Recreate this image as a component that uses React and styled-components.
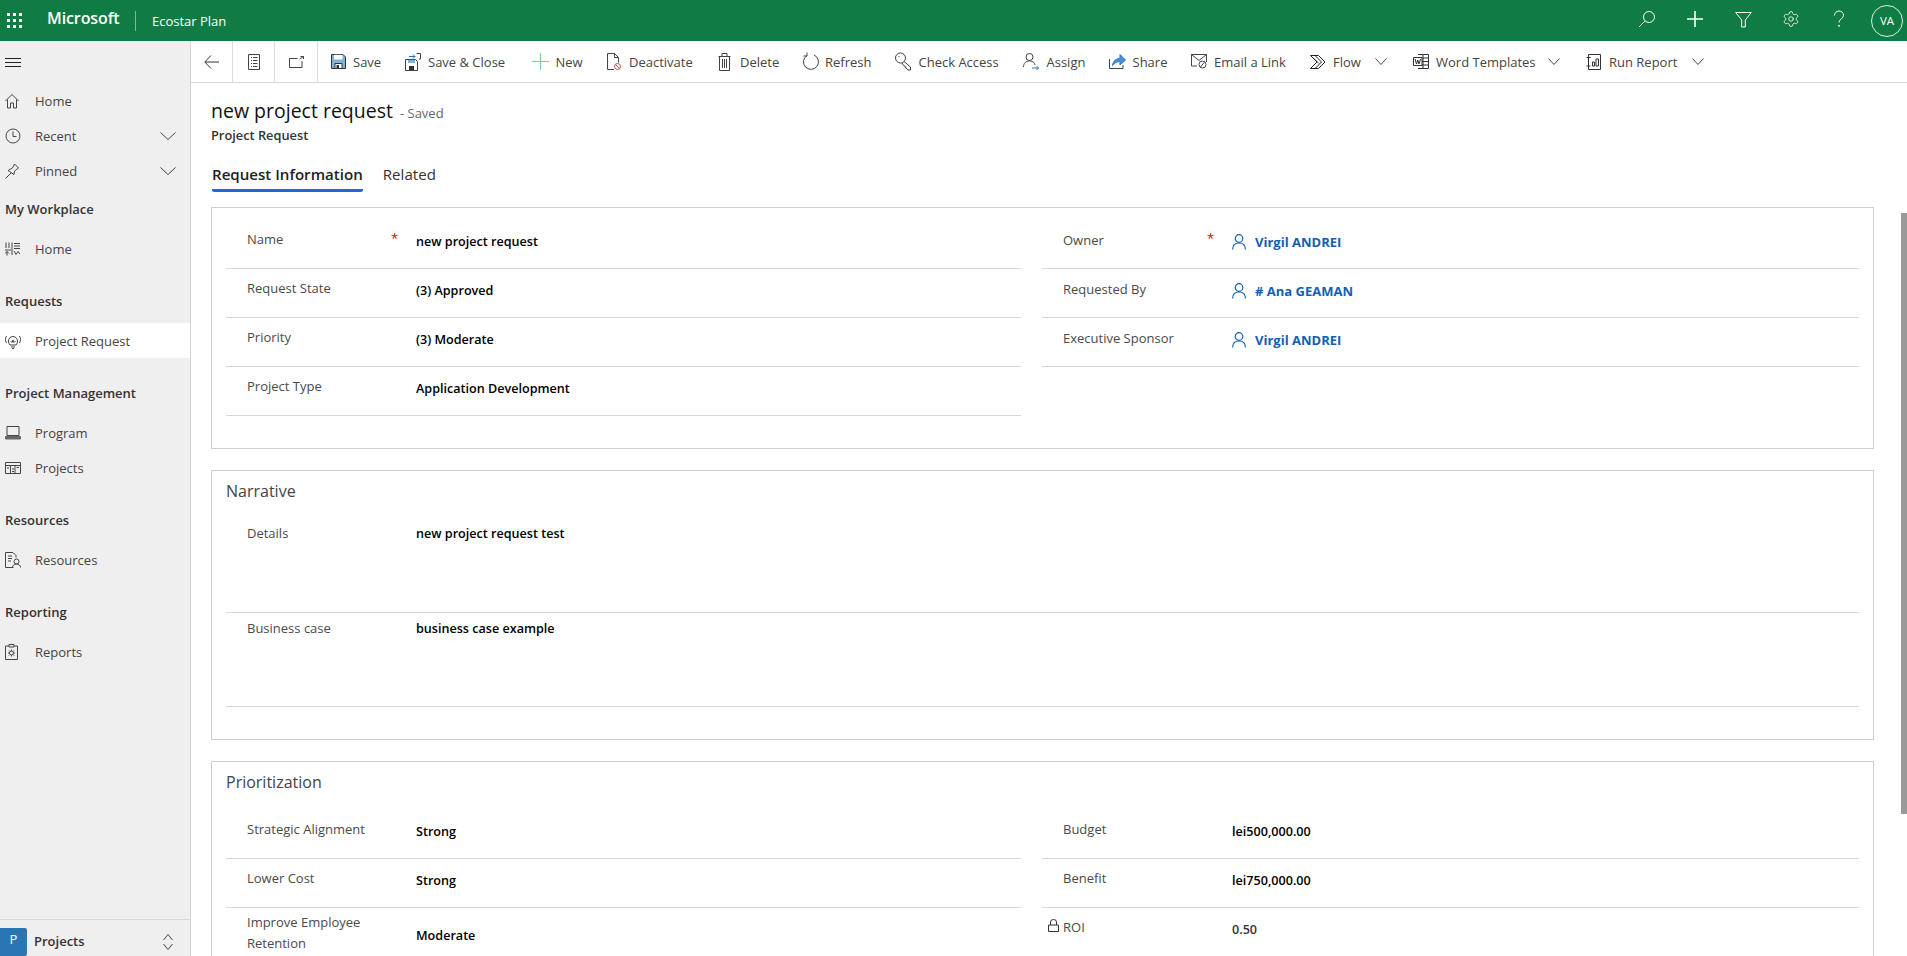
import React from "react";
import styled, { createGlobalStyle } from "styled-components";
import { Settings } from "lucide-react";

const FONT = `"Open Sans", "Noto Sans", "Liberation Sans", sans-serif`;

const Global = createGlobalStyle`
  html, body { margin: 0; padding: 0; height: 100%; overflow: hidden; background: #fff; }
  body { font-family: ${FONT}; color: #333; }
  * { box-sizing: border-box; }
`;

const Page = styled.div`display: flex; flex-direction: column; height: 956px; width: 1907px; overflow: hidden;`;
const Body = styled.div`display: flex; flex: 1; min-height: 0;`;

/* ---------- top bar ---------- */
const TopBar = styled.header`display: flex; align-items: center; height: 41px; flex: none; background: #107c45; color: #fff;`;
const Waffle = styled.div`width: 47px; padding-left: 7px; display: flex; align-items: center;`;
const Brand = styled.span`font-size: 16px; font-weight: 600; letter-spacing: -0.1px; width: 88px; line-height: 41px; padding-bottom: 4px;`;
const BrandRule = styled.span`width: 1px; height: 20px; background: rgba(255,255,255,.45); margin-right: 16px;`;
const AppName = styled.span`font-size: 13px; flex: 1; line-height: 20px;`;
const GlobalActions = styled.div`display: flex; align-items: center; padding-right: 3px;`;
const GlobalAction = styled.div`width: 48px; height: 41px; display: flex; align-items: center; justify-content: center; padding-bottom: 3px;`;
const Avatar = styled.div`width: 32px; height: 32px; border-radius: 50%; border: 1px solid rgba(255,255,255,.85); font-size: 11.5px; display: flex; align-items: center; justify-content: center; margin: 0 1px 0 8px;`;

/* ---------- sidebar ---------- */
const Side = styled.aside`width: 191px; flex: none; background: #efefef; border-right: 1px solid #d4d4d4; display: flex; flex-direction: column;`;
const Burger = styled.div`height: 42px; padding: 1px 0 0 5px; display: flex; align-items: center;`;
const NavList = styled.nav`flex: 1; display: flex; flex-direction: column;`;
const NavHead = styled.div`height: 21px; line-height: 21px; margin: ${p => p.$first ? "11px" : "25px"} 0 11px; padding-left: 5px; font-size: 13px; font-weight: 600; color: #333;`;
const NavItem = styled.div`height: 35px; display: flex; align-items: center; padding-left: 5px; font-size: 13px; color: #444; background: ${p => p.$active ? "#fff" : "transparent"};`;
const NavIcon = styled.span`width: 30px; display: flex; align-items: center; flex: none;`;
const NavText = styled.span`flex: 1;`;
const NavChevron = styled.span`width: 30px; display: flex;`;
const AreaBar = styled.div`height: 37px; flex: none; border-top: 1px solid #d8d8d8; display: flex; align-items: center; padding-top: 7px;`;
const AreaTile = styled.div`width: 27px; height: 28px; background: #2a75b3; color: #fff; font-size: 13px; display: flex; align-items: center; justify-content: center; border-radius: 0 2px 2px 0; padding-bottom: 5px;`;
const AreaName = styled.span`font-size: 13px; font-weight: 600; color: #333; margin-left: 7px; flex: 1; padding-bottom: 2px;`;
const AreaArrows = styled.span`width: 27px; display: flex;`;

/* ---------- main ---------- */
const Main = styled.main`flex: 1; min-width: 0; position: relative; display: flex; flex-direction: column;`;
const Toolbar = styled.div`height: 42px; flex: none; display: flex; align-items: stretch; border-bottom: 1px solid #d8d8d8; font-size: 13px; color: #444;`;
const ToolSquare = styled.div`width: ${p => p.$w}px; display: flex; align-items: center; justify-content: center; border-right: 1px solid #dcdcdc;`;
const ToolLead = styled.div`width: 13px; flex: none;`;
const ToolButton = styled.div`width: ${p => p.$w}px; flex: none; display: flex; align-items: center; white-space: nowrap;`;
const ToolIcon = styled.span`width: ${p => p.$w}px; flex: none; display: flex; align-items: center;`;
const ToolLabel = styled.span`flex: ${p => p.$fill ? 1 : "none"}; line-height: 20px;`;
const ToolChevron = styled.span`width: 38px; flex: none; display: flex;`;

const Scroller = styled.div`flex: 1; overflow: hidden; padding: 0 33px 0 20px;`;
const Head = styled.div`padding-top: 13px; height: 124px;`;
const TitleRow = styled.div`display: flex; align-items: baseline; height: 30px; line-height: 30px;`;
const Title = styled.h1`margin: 0; font-size: 19.5px; font-weight: 500; color: #111; line-height: 30px;`;
const Saved = styled.span`font-size: 13px; color: #666; margin-left: 7px;`;
const Entity = styled.div`font-size: 12.8px; font-weight: 600; color: #333; line-height: 18px; height: 25px;`;
const Tabs = styled.div`display: flex; gap: 20px; margin-top: 9px; padding-left: 1px;`;
const Tab = styled.div`font-size: 15.1px; font-weight: ${p => p.$on ? 600 : 400}; color: ${p => p.$on ? "#222" : "#333"}; line-height: 22px; height: 32px; padding-top: 3px; ${p => p.$on ? "border-bottom: 3px solid #2266e3; border-radius: 0 0 2px 2px;" : ""}`;

const Section = styled.section`border: 1px solid #cfcfcf; padding: 0 14px; margin-bottom: 21px; height: ${p => p.$h}px;`;
const SectionTitle = styled.h2`margin: 0; font-size: 16px; font-weight: 400; color: #444; height: ${p => p.$h}px; line-height: 20px; padding-top: 10px;`;
const Columns = styled.div`display: grid; grid-template-columns: 795px 817px; column-gap: 21px; padding-top: ${p => p.$top || 0}px;`;
const Column = styled.div`display: flex; flex-direction: column;`;
const Row = styled.div`display: grid; grid-template-columns: 21px 146px 23px 1fr; height: ${p => p.$h || 49}px; border-bottom: 1px solid #d8d8d8;`;
const BareRow = styled(Row)`border-bottom: none;`;
const LockSlot = styled.span`padding: ${p => p.$top || 0}px 0 0 6px;`;
const Label = styled.div`font-size: 13px; color: #4a4a4a; line-height: 21px; padding-top: ${p => p.$top ?? 9}px;`;
const Star = styled.span`color: #d00; font-size: 13px; line-height: 16px; padding-top: 10px; margin-left: -2px;`;
const Value = styled.div`font-size: 12.6px; font-weight: 600; color: ${p => p.$plain ? "#333" : "#000"}; line-height: 20px; padding-top: ${p => p.$top ?? 12}px;`;
const LinkValue = styled.div`display: flex; align-items: center; gap: 9px; height: 20px; margin-top: 12px; font-size: 13px; font-weight: 700; color: #1160b7;`;
const Thumb = styled.div`position: absolute; right: 0; top: 172px; width: 6px; height: 601px; background: #999;`;

/* ---------- icons ---------- */
const Svg = ({ w = 16, h = 16, c = "#444", sw = 1, vb, children }) => (
  <svg width={w} height={h} viewBox={vb || `0 0 ${w} ${h}`} fill="none" stroke={c} strokeWidth={sw}>{children}</svg>
);
const Chevron = ({ w = 16, c = "#444" }) => <Svg w={w} h={10} c={c} vb={`0 0 ${w} 10`}><path d={`M.5 1.500 L${w / 2} ${w > 13 ? 8.500 : 7.500} L${w - .5} 1.500`} /></Svg>;

const I = {
  waffle: <svg width="16" height="16" fill="#fff">{[1, 7, 13].flatMap(y => [1, 7, 13].map(x => <rect key={x + "-" + y} x={x - 1} y={y - 1} width="3" height="3" />))}</svg>,
  search: <Svg w={18} h={18} c="#fff"><circle cx="11" cy="7" r="5.500" /><path d="M7 11 L1 17" /></Svg>,
  plus: <Svg w={18} h={18} c="#fff" sw={1.6}><path d="M9 1V17M1 9H17" /></Svg>,
  filter: <Svg w={17} h={17} c="#fff"><path d="M.7 1.500H16.300L10.300 9V16H6.700V9Z" /></Svg>,
  gear: <Settings size={18} strokeWidth={1.1} color="#fff" />,
  help: <Svg w={12} h={18} c="#fff"><path d="M1.500 5.500C1.500 3 3.500 1 6 1s4.500 1.800 4.500 4.300c0 3.500-4.500 3.800-4.500 7.200" /><circle cx="6" cy="15.800" r=".6" /></Svg>,
  burger: <Svg w={16} h={10}><path stroke="#222" d="M0 .5H16M0 4.500H16M0 8.500H16" /></Svg>,
  home: <Svg w={14} h={16}><path d="M.5 8L7 1.500 13.500 8M2.500 6.500V15H5.500V10H8.500V15H11.500V6.500" /></Svg>,
  clock: <Svg w={16} h={16}><circle cx="8" cy="8" r="7" /><path d="M8 3.500V8.500H11.500" /></Svg>,
  pin: <Svg w={16} h={16}><path d="M.5 15.500L6 10M3 7.500L9 11.500 9.500 8 13.500 5 9.500 1 7.500 5 3 7.500Z" /></Svg>,
  grid: <Svg w={16} h={14}><path d="M1 .5V6M4 .5V6M7 .5V13M9 1.500H15M9 4H15M9 6.500H15M0 8H6M0 11.500L2 9.500 4 11.500M2 9.500V13.500M9 9L11 12.500 13 9.500 15 12" /></Svg>,
  bulb: <Svg w={16} h={16}><path d="M5 12C3.800 10.500 3.500 9.500 3.500 8a4.500 4.500 0 0 1 9 0c0 1.500-.3 2.500-1.500 4ZM6 14H10M7 15.500H9M5.500 8L7 9.500 8 7 9 9.500 10.500 8M1.500 10C.2 7.500.2 5 1.500 3M14.500 10C15.800 7.500 15.800 5 14.500 3" /></Svg>,
  laptop: <Svg w={16} h={14}><path d="M2 .5H14V9.500H2Z" /><path fill="#666" stroke="#666" d="M.5 10.500H15.500V13H.5Z" /></Svg>,
  board: <Svg w={16} h={12}><path d="M.5.5H15.500V11.500H.5ZM.5 3.500H15.500M5.500 3.500V11.500M10 3.500V11.500M2 6H4M7 7H9M11.500 5.500H14M7 9.500H9" /></Svg>,
  resource: <Svg w={16} h={16}><path d="M8.500 15.500H.5V.5H8L11 3.500V5.500M3 4H7M3 6.500H7M3 9H6" /><circle cx="11.500" cy="9.500" r="2.500" /><path d="M7.500 15.500c0-2 1.500-3.500 4-3.500s4 1.500 4 3.500" /></Svg>,
  report: <Svg w={13} h={16}><path d="M4 2H.5V15.500H12.500V2H9M4 .5H9V3H4Z" /><circle cx="6.500" cy="9" r="2" /><path d="M6.500 5.500V7M6.500 11V12.500M3 9H4.500M8.500 9H10M4 6.500L5 7.500M8 10.500L9 11.500M9 6.500L8 7.500M5 10.500L4 11.500" /></Svg>,
  updown: <Svg w={10} h={16}><path d="M.5 6L5 .5 9.500 6M.5 10L5 15.500 9.500 10" /></Svg>,
  back: <Svg w={15} h={14} c="#333"><path d="M7 .5L.8 7 7 13.500M1 7H15" /></Svg>,
  form: <Svg w={12} h={16}><path d="M.5.5H11.500V15.500H.5ZM3 3.500H4M5 3.500H9.500M3 6.500H4M5 6.500H9.500M3 9.500H4M5 9.500H9.500M3 12.500H4M5 12.500H9.500" /></Svg>,
  popout: <Svg w={15} h={12}><path d="M8.500 2.500H.5V11.500H13V5M10.500 3L14.500.5M11.500.5H14.500V3" /></Svg>,
  save: <Svg w={15} h={15} c="#444"><path fill="#7db4dc" d="M.5.5H12L14.500 3V14.500H.5Z" stroke="#333" /><path fill="#fff" d="M3 .8H11.500V5.500H3Z" stroke="none" /><path fill="#fff" stroke="#333" d="M4 9.500H11V14.500H4Z" /><path fill="#333" stroke="none" d="M5.500 11H8V14H5.500Z" /></Svg>,
  saveClose: <Svg w={16} h={18} c="#444"><path d="M.5 6.500H10.500L12.500 8.500V17.500H.5Z" fill="#fff" /><path stroke="none" fill="#7db4dc" d="M3 7H10V10H3Z" /><path fill="#333" stroke="none" d="M4 13H9V17H4Z" /><path stroke="#2773b8" d="M4 3.500H10M8 1.500L10 3.500 8 5.500" /><path d="M11.500.5H15.500V6H14" /></Svg>,
  plusGreen: <Svg w={17} h={17} c="#81cf9e" sw={1.2}><path d="M8.500 0V17M0 8.500H17" /></Svg>,
  deactivate: <Svg w={14} h={18}><path d="M7 16.500H.5V.5H7.500L11.500 4.500V9.500M7.500.5V4.500H11.500" /><circle cx="10.500" cy="13.500" r="3" stroke="#d94444" /><path stroke="#d94444" d="M8.500 11.500L12.500 15.500" /></Svg>,
  trash: <Svg w={13} h={18}><path d="M.5 3.500H12.500M4 3.500V.5H9V3.500M1.500 3.500V17.500H11.500V3.500M4.500 6V15M6.500 6V15M8.500 6V15" /></Svg>,
  refresh: <Svg w={17} h={19}><path d="M5 3.500A7.500 7.500 0 1 0 12 3M5 .5V4H1.500" /></Svg>,
  key: <Svg w={17} h={19}><circle cx="5.500" cy="6" r="5" /><path d="M3.500 4.500h1M9 9.500L15.500 15V18H13L12 16.500 10.500 16 10 14 8.500 13.500 7 11" /></Svg>,
  assign: <Svg w={17} h={17}><circle cx="6.500" cy="4" r="3.500" /><path d="M.5 14C.5 10 3 8 6.500 8s5 1.500 5.500 4" /><path stroke="#2773b8" d="M9 15H15.500M13.500 13L15.500 15 13.500 17" /></Svg>,
  share: <Svg w={17} h={17} c="#444"><path d="M.5 6V15.500H14V12" /><path fill="#4a90d0" stroke="#2f78bd" d="M3.500 12.500C4 8 7 5.500 11 5.500V1.500L16.500 7 11 12V8.500C8 8.500 5.500 10 3.500 12.500Z" /></Svg>,
  email: <Svg w={16} h={15}><path d="M.5.5H15.500V8M.5.5V12H6M.5.5L8 6.500 15.500.5" /><circle cx="11.500" cy="10.500" r="3.500" /><path d="M9.500 13L13.500 8" /></Svg>,
  flow: <Svg w={16} h={14} c="#222"><path d="M.5.5H8.500L15 7 8.500 13.500H.5L7 7Z" /><path d="M5 .5L11.500 7 5 13.500M2.500 2.500L8.500 8" /></Svg>,
  word: <Svg w={16} h={15} c="#333"><path d="M5 .5H15.500V14.500H5M5 4H15.500M5 7.500H15.500M5 11H15.500M10 .5V14.500" /><path fill="#fff" d="M.5 3.500H9V11.500H.5Z" /><path d="M2 5L3.500 10 4.800 6 6 10 7.500 5" /></Svg>,
  run: <Svg w={15} h={18} c="#333"><path d="M2.500 1.500H14.500V16.500H2.500ZM.5 4.500H4.500M.5 13H4.500M2.500 4.500V13" /><path d="M6.500 9H8.500V13H6.500ZM10 6H12.500V13H10Z" /></Svg>,
  person: <Svg w={14} h={16} c="#1160b7" sw={1.2}><circle cx="7" cy="4.500" r="3.800" /><path d="M.6 15.500C.6 11.500 3 9 7 9s6.400 2.500 6.400 6.500" /></Svg>,
  lock: <Svg w={11} h={13} c="#333"><path d="M.5 6H10.500V12.500H.5ZM2.500 6V3A3 2.500 0 0 1 8.500 3V6" /></Svg>,
};

/* ---------- data ---------- */
const TOOLS = [
  ["Save", I.save, 74, 22], ["Save & Close", I.saveClose, 127, 23], ["New", I.plusGreen, 75, 23.5],
  ["Deactivate", I.deactivate, 110.5, 22], ["Delete", I.trash, 84.5, 22.5], ["Refresh", I.refresh, 93, 23],
  ["Check Access", I.key, 128, 23.5], ["Assign", I.assign, 86, 23.5], ["Share", I.share, 82, 23.5], ["Email a Link", I.email, 119, 23],
];
const MENUS = [
  ["Flow", I.flow, 103, 23], ["Word Templates", I.word, 173, 23], ["Run Report", I.run, 144, 23],
];

const Field = ({ label, value, star }) => (
  <Row>
    <span /><Label>{label}</Label>
    {star ? <Star>*</Star> : <span />}
    <Value>{value}</Value>
  </Row>
);
const PersonField = ({ label, value, star }) => (
  <Row>
    <span /><Label $top={10}>{label}</Label>
    {star ? <Star>*</Star> : <span />}
    <LinkValue>{I.person}{value}</LinkValue>
  </Row>
);
const NavEntry = ({ icon, text, active, chevron }) => (
  <NavItem $active={active}>
    <NavIcon>{icon}</NavIcon>
    <NavText>{text}</NavText>
    {chevron && <NavChevron><Chevron /></NavChevron>}
  </NavItem>
);

export default function App() {
  return (
    <Page>
      <Global />
      <TopBar>
        <Waffle>{I.waffle}</Waffle>
        <Brand>Microsoft</Brand>
        <BrandRule />
        <AppName>Ecostar Plan</AppName>
        <GlobalActions>
          <GlobalAction>{I.search}</GlobalAction>
          <GlobalAction>{I.plus}</GlobalAction>
          <GlobalAction>{I.filter}</GlobalAction>
          <GlobalAction>{I.gear}</GlobalAction>
          <GlobalAction>{I.help}</GlobalAction>
          <Avatar>VA</Avatar>
        </GlobalActions>
      </TopBar>
      <Body>
        <Side>
          <Burger>{I.burger}</Burger>
          <NavList>
            <NavEntry icon={I.home} text="Home" />
            <NavEntry icon={I.clock} text="Recent" chevron />
            <NavEntry icon={I.pin} text="Pinned" chevron />
            <NavHead $first>My Workplace</NavHead>
            <NavEntry icon={I.grid} text="Home" />
            <NavHead>Requests</NavHead>
            <NavEntry icon={I.bulb} text="Project Request" active />
            <NavHead>Project Management</NavHead>
            <NavEntry icon={I.laptop} text="Program" />
            <NavEntry icon={I.board} text="Projects" />
            <NavHead>Resources</NavHead>
            <NavEntry icon={I.resource} text="Resources" />
            <NavHead>Reporting</NavHead>
            <NavEntry icon={I.report} text="Reports" />
          </NavList>
          <AreaBar>
            <AreaTile>P</AreaTile>
            <AreaName>Projects</AreaName>
            <AreaArrows>{I.updown}</AreaArrows>
          </AreaBar>
        </Side>
        <Main>
          <Toolbar>
            <ToolSquare $w={42}>{I.back}</ToolSquare>
            <ToolSquare $w={42}>{I.form}</ToolSquare>
            <ToolSquare $w={43}>{I.popout}</ToolSquare>
            <ToolLead />
            {TOOLS.map(([t, ic, w, iw]) => (
              <ToolButton key={t} $w={w}><ToolIcon $w={iw}>{ic}</ToolIcon><ToolLabel>{t}</ToolLabel></ToolButton>
            ))}
            {MENUS.map(([t, ic, w, iw]) => (
              <ToolButton key={t} $w={w}><ToolIcon $w={iw}>{ic}</ToolIcon><ToolLabel $fill>{t}</ToolLabel><ToolChevron><Chevron w={12} /></ToolChevron></ToolButton>
            ))}
          </Toolbar>
          <Scroller>
            <Head>
              <TitleRow><Title>new project request</Title><Saved>- Saved</Saved></TitleRow>
              <Entity>Project Request</Entity>
              <Tabs>
                <Tab $on>Request Information</Tab>
                <Tab>Related</Tab>
              </Tabs>
            </Head>
            <Section $h={242}>
              <Columns $top={12}>
                <Column>
                  <Field label="Name" value="new project request" star />
                  <Field label="Request State" value="(3) Approved" />
                  <Field label="Priority" value="(3) Moderate" />
                  <Field label="Project Type" value="Application Development" />
                </Column>
                <Column>
                  <PersonField label="Owner" value="Virgil ANDREI" star />
                  <PersonField label="Requested By" value="# Ana GEAMAN" />
                  <PersonField label="Executive Sponsor" value="Virgil ANDREI" />
                </Column>
              </Columns>
            </Section>
            <Section $h={270}>
              <SectionTitle $h={47}>Narrative</SectionTitle>
              <Row $h={95}>
                <span /><Label $top={5}>Details</Label><span /><Value $top={6}>new project request test</Value>
              </Row>
              <Row $h={94}>
                <span /><Label $top={5}>Business case</Label><span /><Value $top={6}>business case example</Value>
              </Row>
            </Section>
            <Section $h={260}>
              <SectionTitle $h={48}>Prioritization</SectionTitle>
              <Columns>
                <Column>
                  <Field label="Strategic Alignment" value="Strong" />
                  <Field label="Lower Cost" value="Strong" />
                  <BareRow $h={56}>
                    <span /><Label $top={4}>Improve Employee Retention</Label><span /><Value $top={18}>Moderate</Value>
                  </BareRow>
                </Column>
                <Column>
                  <Field label="Budget" value="lei500,000.00" />
                  <Field label="Benefit" value="lei750,000.00" />
                  <BareRow>
                    <LockSlot $top={7}>{I.lock}</LockSlot><Label>ROI</Label><span /><Value $plain>0.50</Value>
                  </BareRow>
                </Column>
              </Columns>
            </Section>
          </Scroller>
          <Thumb />
        </Main>
      </Body>
    </Page>
  );
}
